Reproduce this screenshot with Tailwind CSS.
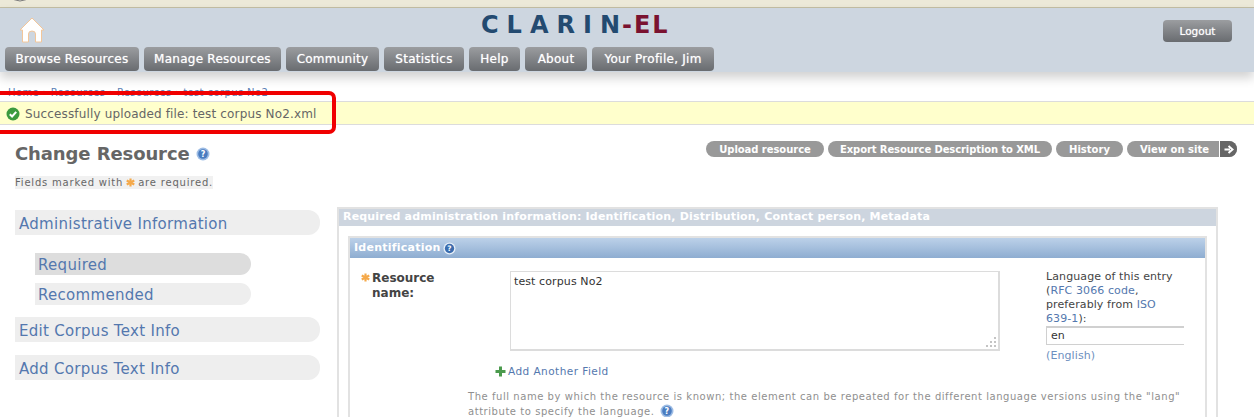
<!DOCTYPE html>
<html lang="en" class="bg-white">
<head>
    <meta charset="UTF-8">
    <title>Change Resource</title>
    <script src="https://cdn.jsdelivr.net/npm/@tailwindcss/browser@4"></script>
</head>
<body class="relative w-[1254px] h-[417px] overflow-hidden bg-white font-['DejaVu_Sans',sans-serif] text-[#333]">
    <!-- browser strip -->
    <div class="h-[8px] bg-[#ece9d8] border-b border-[#c4bfa5] overflow-hidden">
        <svg class="ml-[8px]" width="24" height="4" viewBox="0 0 24 4"><path d="M1 -4 Q12 6 23 -4" fill="#f4f2e6" stroke="#777" stroke-width="1"/></svg>
    </div>

    <!-- header -->
    <header class="h-[64px] bg-[#cdd6e0] shadow-[0_6px_10px_rgba(0,0,0,0.18)] flex justify-between pl-[5px] pr-[22px]">
        <div class="flex flex-col">
            <div class="h-[39px] flex items-start">
                <svg class="ml-[14px] mt-[9px]" width="26" height="26" viewBox="0 0 26 26">
                    <path d="M13 1 L25 13 L22.500 13 L22.500 25 L16.500 25 L16.500 17 Q16.500 14 13 14 Q9.500 14 9.500 17 L9.500 25 L3.500 25 L3.500 13 L1 13 Z" fill="#fff" stroke="#f2c69a" stroke-width="1"/>
                </svg>
            </div>
            <nav class="flex gap-[5px]">
                <a class="h-[24px] w-[134px] flex items-center justify-center rounded-[4px] bg-gradient-to-b from-[#9b9da0] to-[#696c70] text-white text-[12px] tracking-[0.25px] [text-shadow:0_0_1px_rgba(255,255,255,0.7)]">Browse Resources</a>
                <a class="h-[24px] w-[137px] flex items-center justify-center rounded-[4px] bg-gradient-to-b from-[#9b9da0] to-[#696c70] text-white text-[12px] tracking-[0.25px] [text-shadow:0_0_1px_rgba(255,255,255,0.7)]">Manage Resources</a>
                <a class="h-[24px] w-[93px] flex items-center justify-center rounded-[4px] bg-gradient-to-b from-[#9b9da0] to-[#696c70] text-white text-[12px] tracking-[0.25px] [text-shadow:0_0_1px_rgba(255,255,255,0.7)]">Community</a>
                <a class="h-[24px] w-[80px] flex items-center justify-center rounded-[4px] bg-gradient-to-b from-[#9b9da0] to-[#696c70] text-white text-[12px] tracking-[0.25px] [text-shadow:0_0_1px_rgba(255,255,255,0.7)]">Statistics</a>
                <a class="h-[24px] w-[51px] flex items-center justify-center rounded-[4px] bg-gradient-to-b from-[#9b9da0] to-[#696c70] text-white text-[12px] tracking-[0.25px] [text-shadow:0_0_1px_rgba(255,255,255,0.7)]">Help</a>
                <a class="h-[24px] w-[62px] flex items-center justify-center rounded-[4px] bg-gradient-to-b from-[#9b9da0] to-[#696c70] text-white text-[12px] tracking-[0.25px] [text-shadow:0_0_1px_rgba(255,255,255,0.7)]">About</a>
                <a class="h-[24px] w-[122px] flex items-center justify-center rounded-[4px] bg-gradient-to-b from-[#9b9da0] to-[#696c70] text-white text-[12px] tracking-[0.25px] [text-shadow:0_0_1px_rgba(255,255,255,0.7)]">Your Profile, Jim</a>
            </nav>
        </div>
        <div class="absolute left-[481px] top-[11px] text-[24px] leading-[28px] font-bold text-[#234a70] whitespace-nowrap"><span class="tracking-[8px]">CLARI</span>N<span class="text-[#7a1230] tracking-[2px] ml-[2px]">-EL</span></div>
        <a class="mt-[12px] h-[22px] w-[69px] flex items-center justify-center rounded-[4px] bg-gradient-to-b from-[#9b9da0] to-[#696c70] text-white text-[10.5px] pt-[1px] [text-shadow:0_0_1px_rgba(255,255,255,0.7)]">Logout</a>
    </header>

    <!-- breadcrumb -->
    <div class="h-[30px] pl-[8px] pt-[15px] text-[10px] leading-[12px] tracking-[0.4px] text-[#5b7fb5] border-b border-[#dcdcdc] whitespace-nowrap overflow-hidden">Home › Resources › Resources › test corpus No2</div>

    <!-- message -->
    <div class="h-[23px] pt-[1px] bg-[#ffffcc] border-b border-[#dcdcdc] flex items-center pl-[6px] gap-[5px] text-[12px] text-[#666] tracking-[0.15px]">
        <svg width="14" height="14" viewBox="0 0 14 14"><circle cx="7" cy="7" r="6.500" fill="#3c9a3f"/><path d="M3.800 7.200 L6.100 9.500 L10.200 4.900" fill="none" stroke="#fff" stroke-width="2"/></svg>
        <span>Successfully uploaded file: test corpus No2.xml</span>
    </div>

    <!-- content -->
    <main class="flex pl-[15px]">
        <aside class="w-[305px] shrink-0">
            <div class="h-[39px] pt-[18px] flex items-center gap-[6px]">
                <h1 class="text-[18px] leading-[22px] font-bold text-[#666] tracking-[-0.1px]">Change Resource</h1>
                <svg width="14" height="14" viewBox="0 0 14 14"><circle cx="7" cy="7" r="6.500" fill="#9dbce4"/><circle cx="7" cy="7" r="4.800" fill="#4a7cc0"/><text x="7" y="10" text-anchor="middle" font-size="8" font-weight="700" fill="#fff" font-family="DejaVu Sans">?</text></svg>
            </div>
            <p class="mt-[12px] w-fit h-[13px] bg-[#f1f1f1] flex items-center gap-[3px] text-[10px] tracking-[0.8px] text-[#666] whitespace-nowrap">
                Fields marked with
                <svg width="9" height="9" viewBox="0 0 10 10"><path d="M5 0.500 V9.500 M0.800 2.800 L9.200 7.200 M9.200 2.800 L0.800 7.200" stroke="#f5a94a" stroke-width="2.400"/></svg>
                are required.
            </p>
            <a class="mt-[21px] h-[25px] pt-[3px] flex items-center pl-[4px] rounded-r-[12px] bg-[#eeeeee] text-[15px] tracking-[0.3px] text-[#5478ae] whitespace-nowrap">Administrative Information</a>
            <div class="pl-[20px] pt-[18px]">
                <a class="w-[216px] h-[22px] pt-[3px] flex items-center pl-[3px] rounded-r-[11px] bg-[#dddddd] text-[15px] tracking-[0.3px] text-[#5478ae]">Required</a>
                <a class="mt-[8px] w-[216px] h-[22px] pt-[2px] flex items-center pl-[3px] rounded-r-[11px] bg-[#eeeeee] text-[15px] tracking-[0.3px] text-[#5478ae]">Recommended</a>
            </div>
            <a class="mt-[12px] h-[25px] pt-[3px] flex items-center pl-[4px] rounded-r-[12px] bg-[#eeeeee] text-[15px] tracking-[0.3px] text-[#5478ae]">Edit Corpus Text Info</a>
            <a class="mt-[13px] h-[25px] pt-[3px] flex items-center pl-[4px] rounded-r-[12px] bg-[#eeeeee] text-[15px] tracking-[0.3px] text-[#5478ae]">Add Corpus Text Info</a>
        </aside>

        <section class="ml-[17px] w-[881px] pt-[16px]">
            <!-- object tools -->
            <div class="flex justify-end gap-[4px] -mr-[19px] w-[900px]">
                <a class="h-[16px] w-[118px] flex items-center justify-center rounded-full bg-[#999] text-white text-[10px] font-bold tracking-[-0.05px]">Upload resource</a>
                <a class="h-[16px] w-[224px] flex items-center justify-center rounded-full bg-[#999] text-white text-[10px] font-bold tracking-[-0.1px]">Export Resource Description to XML</a>
                <a class="h-[16px] w-[67px] flex items-center justify-center rounded-full bg-[#999] text-white text-[10px] font-bold">History</a>
                <a class="h-[16px] w-[110px] flex items-center rounded-full bg-[#999] text-white text-[10px] font-bold overflow-hidden">
                    <span class="flex-1 text-center pl-[3px]">View on site</span>
                    <span class="w-[18px] h-full bg-[#666] border-l border-white flex items-center justify-center">
                        <svg width="10" height="9" viewBox="0 0 10 9"><path d="M0.500 4.500 H6 M4.500 1 L8.500 4.500 L4.500 8" fill="none" stroke="#fff" stroke-width="2"/></svg>
                    </span>
                </a>
            </div>

            <!-- fieldset -->
            <div class="mt-[50px] w-[881px] border-x-2 border-t-2 border-[#e2e2e2]">
                <h2 class="h-[17px] bg-[#cdd5df] pl-[4px] flex items-center text-[11px] font-bold text-white tracking-[0.18px] whitespace-nowrap">Required administration information: Identification, Distribution, Contact person, Metadata</h2>
                <div class="ml-[9px] mr-[9px] mt-[10px] border-x-2 border-t-2 border-[#e2e2e2]">
                    <h3 class="h-[20px] bg-gradient-to-b from-[#bcd1e9] to-[#8eadd1] pl-[4px] flex items-center gap-[2px] text-[11px] font-bold text-white tracking-[0.25px]">
                        Identification
                        <svg width="13" height="13" viewBox="0 0 14 14"><circle cx="7" cy="7" r="6.500" fill="#e6eef7"/><circle cx="7" cy="7" r="5" fill="#3b6cae"/><text x="7" y="10" text-anchor="middle" font-size="8" font-weight="700" fill="#fff" font-family="DejaVu Sans">?</text></svg>
                    </h3>
                    <div class="flex pt-[13px] h-[159px] overflow-hidden">
                        <div class="w-[160px] pl-[11px] flex items-start shrink-0">
                            <svg class="mt-[2px] mr-[2px] shrink-0" width="9" height="9" viewBox="0 0 10 10"><path d="M5 0.500 V9.500 M0.800 2.800 L9.200 7.200 M9.200 2.800 L0.800 7.200" stroke="#f5a94a" stroke-width="2.400"/></svg>
                            <span class="text-[12px] leading-[15px] font-bold text-[#444]">Resource<br>name:</span>
                        </div>
                        <div class="w-[490px] shrink-0">
                            <div class="relative h-[80px] border-2 border-[#dcdcdc] border-t border-l pl-[3px] pt-[3px] text-[11px] leading-[13px] tracking-[0.1px] text-[#333]">test corpus No2
                                <svg class="absolute right-[1px] bottom-[1px]" width="12" height="12" viewBox="0 0 12 12"><path d="M9 1h2v2H9zM5 5h2v2H5zM9 5h2v2H9zM1 9h2v2H1zM5 9h2v2H5zM9 9h2v2H9z" fill="#c4c4c4"/></svg>
                            </div>
                            <div class="mt-[14px] ml-[-15px] flex items-center gap-[2px] text-[10.5px] leading-[13px] text-[#5478ae] tracking-[0.45px]">
                                <svg width="11" height="11" viewBox="0 0 11 11"><path d="M4 0.500h3v3.500h3.500v3H7v3.500H4V7H0.500V4H4z" fill="#4b9a4d"/></svg>
                                Add Another Field
                            </div>
                            <p class="mt-[12px] ml-[-42px] w-[725px] text-[10px] leading-[14px] tracking-[0.55px] text-[#8f8f8f]">The full name by which the resource is known; the element can be repeated for the different language versions using the "lang" attribute to specify the language.
                                <svg class="inline-block ml-[2px] align-[-3px]" width="14" height="14" viewBox="0 0 14 14"><circle cx="7" cy="7" r="6.500" fill="#9dbce4"/><circle cx="7" cy="7" r="4.800" fill="#4a7cc0"/><text x="7" y="10" text-anchor="middle" font-size="8" font-weight="700" fill="#fff" font-family="DejaVu Sans">?</text></svg>
                            </p>
                        </div>
                        <div class="ml-[46px] mt-[-1px] w-[138px] shrink-0 text-[11px] leading-[14px] tracking-[0.1px] text-[#444] whitespace-nowrap">
                            Language of this entry<br>(<a class="text-[#5478ae]">RFC 3066 code</a>,<br>preferably from <a class="text-[#5478ae]">ISO</a><br><a class="text-[#5478ae]">639-1</a>):
                            <div class="h-[19px] border border-r-0 border-[#d0d0d0] border-t-2 pl-[4px] flex items-center text-[11px] text-[#333]">en</div>
                            <a class="block mt-[4px] text-[#6e90c0]">(English)</a>
                        </div>
                    </div>
                </div>
            </div>
        </section>
    </main>

    <!-- red annotation drawn over the screenshot -->
    <div class="absolute left-[-10px] top-[91px] w-[346px] h-[43px] border-[4px] border-[#f00000] rounded-[7px]"></div>
</body>
</html>
